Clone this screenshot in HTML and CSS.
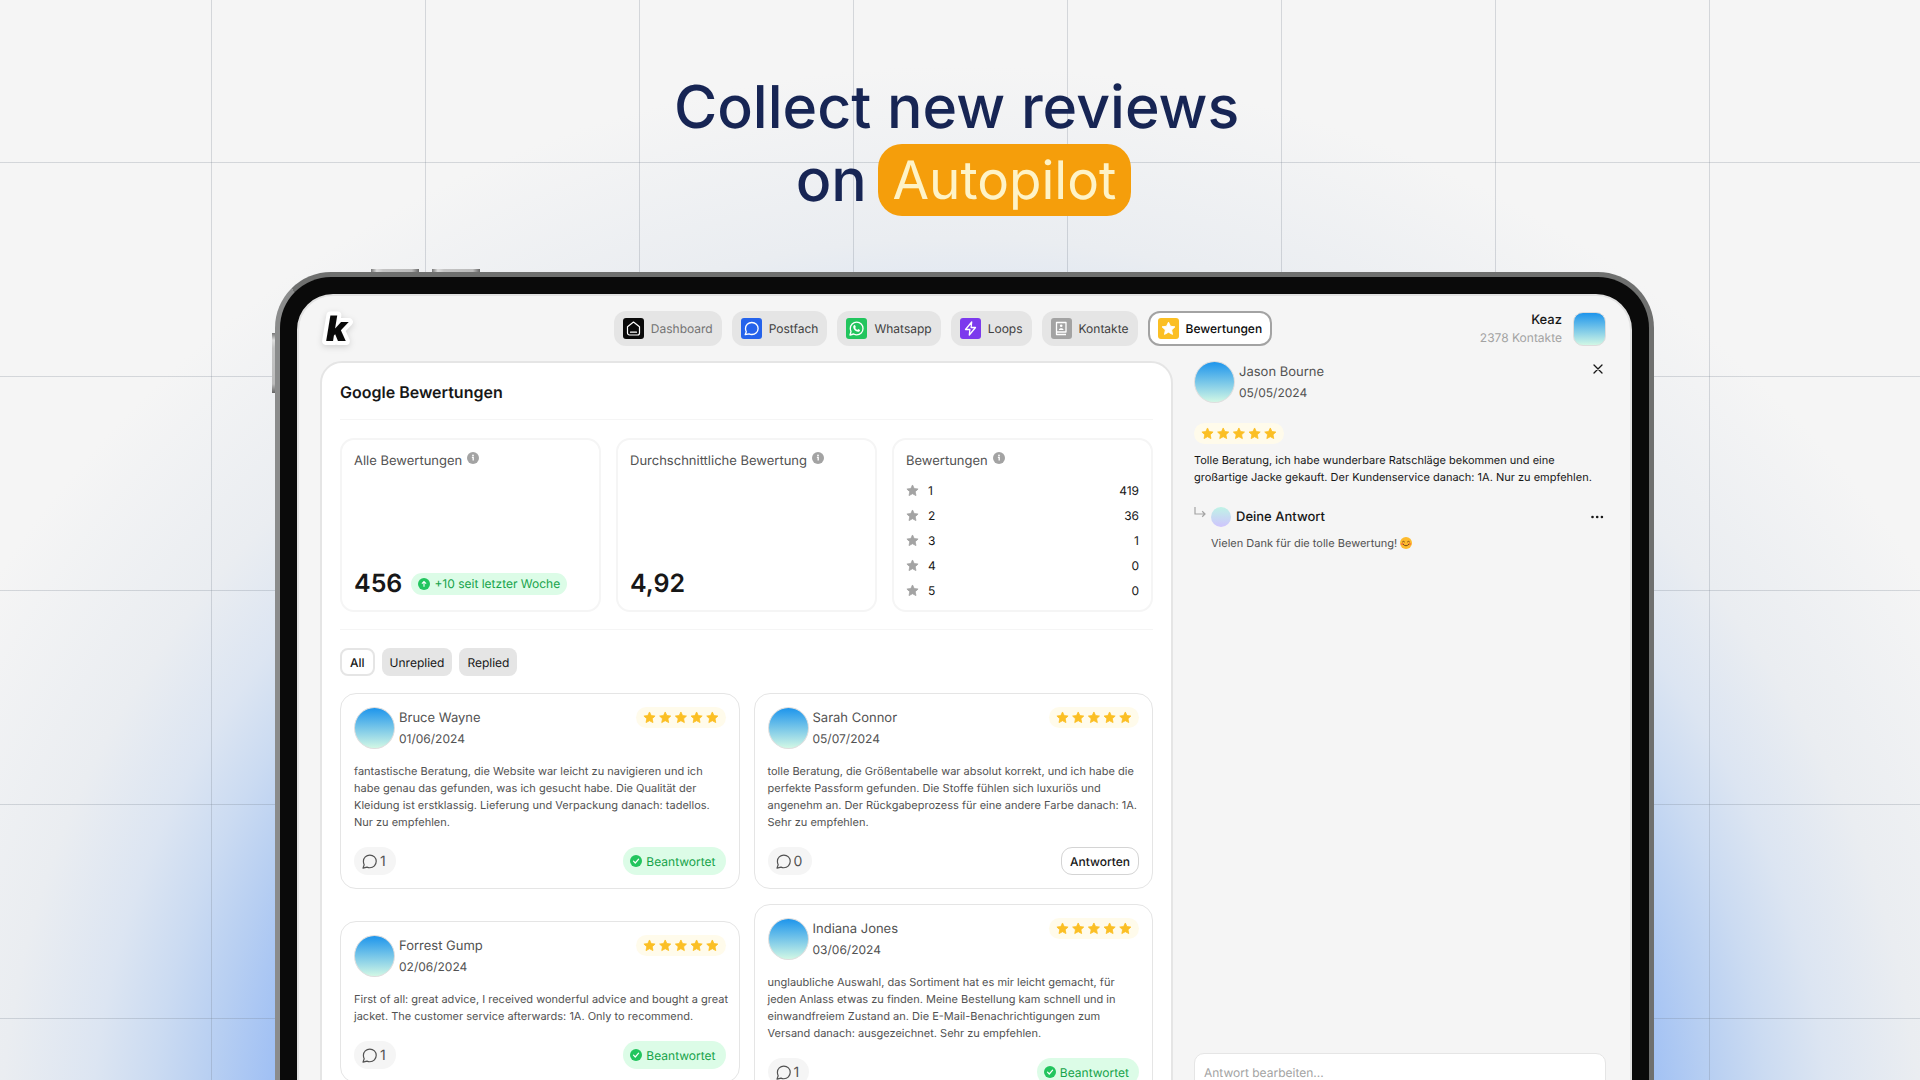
FILE: index.html
```html
<!DOCTYPE html>
<html lang="de">
<head>
    <meta charset="UTF-8">
    <meta name="viewport" content="width=device-width, initial-scale=1.0">
    <title>Keaz - Bewertungen</title>
    <link rel="stylesheet" href="styles.css">
</head>
<body>
    <svg class="sprite" aria-hidden="true">
        <symbol id="star" viewBox="0 0 24 24"><path d="M12 1.8l3.1 6.6 7.2.9-5.3 5 1.4 7.1L12 17.9l-6.4 3.5L7 14.300 1.700 9.300l7.200-.9z" fill="currentColor" stroke="currentColor" stroke-width="1.500" stroke-linejoin="round"/></symbol>
        <symbol id="stars" viewBox="0 0 76 14">
            <use href="#star" x="0" y="0" width="13" height="13"/>
            <use href="#star" x="15.700" y="0" width="13" height="13"/>
            <use href="#star" x="31.400" y="0" width="13" height="13"/>
            <use href="#star" x="47.100" y="0" width="13" height="13"/>
            <use href="#star" x="62.800" y="0" width="13" height="13"/>
        </symbol>
        <symbol id="info" viewBox="0 0 12 12"><circle cx="6" cy="6" r="6" fill="#a3a3a3"/><circle cx="6" cy="3.400" r=".9" fill="#fff"/><path d="M4.900 5.400h1.300v3.200" fill="none" stroke="#fff" stroke-width="1.300"/></symbol>
        <symbol id="bubble" viewBox="0 0 24 24"><path d="M12.500 3c5.200 0 9 3.900 9 8.800s-3.800 9-9 9c-1.500 0-2.800-.3-4-.9l-5.700 1.500 1.700-4.700c-.7-1.400-1.100-3-1.100-4.900C3.400 6.900 7.300 3 12.500 3z" fill="none" stroke="currentColor" stroke-width="1.700" stroke-linejoin="round"/></symbol>
        <symbol id="check" viewBox="0 0 12 12"><circle cx="6" cy="6" r="6" fill="#22c55e"/><path d="M3.500 6.200l1.800 1.800 3.300-3.800" fill="none" stroke="#fff" stroke-width="1.200" stroke-linecap="round" stroke-linejoin="round"/></symbol>
    </svg>

    <div class="stage">
        <h1 class="headline">Collect new reviews&nbsp;<br>on <span class="highlight">Autopilot</span></h1>

        <div class="tablet">
            <span class="key key-up"></span>
            <span class="key key-down"></span>
            <span class="key key-power"></span>
            <div class="screen">
                <header class="topbar">
                    <a class="logo" href="#" aria-label="Keaz">
                        <svg width="36" height="40" viewBox="0 0 36 40"><text x="6" y="32" class="logo-text">k</text></svg>
                    </a>
                    <nav class="nav">
                        <a class="tab muted" href="#">
                            <svg class="tab-icon" viewBox="0 0 21 21"><rect width="21" height="21" rx="3" fill="#0a0a0a"/><path d="M4.500 8.700l6-4.700 6 4.700v6.300a2 2 0 0 1-2 2h-8a2 2 0 0 1-2-2zM7.500 14.200h6" fill="none" stroke="#fff" stroke-width="1.200" stroke-linejoin="round" stroke-linecap="round"/></svg>
                            Dashboard
                        </a>
                        <a class="tab" href="#">
                            <svg class="tab-icon" viewBox="0 0 21 21"><rect width="21" height="21" rx="3" fill="#2563eb"/><path d="M10.800 4.500c3.700 0 6.300 2.600 6.300 6s-2.600 6-6.300 6c-1 0-1.900-.2-2.700-.6l-3.900.8 1.100-3c-.5-1-.8-2-.8-3.200 0-3.400 2.600-6 6.300-6z" fill="none" stroke="#fff" stroke-width="1.300" stroke-linejoin="round"/></svg>
                            Postfach
                        </a>
                        <a class="tab" href="#">
                            <svg class="tab-icon" viewBox="0 0 21 21"><rect width="21" height="21" rx="3" fill="#22c55e"/><path d="M10.700 4.200c3.600 0 6.300 2.700 6.300 6.300s-2.700 6.300-6.300 6.300c-1.100 0-2.100-.3-3-.8l-3.700 1 1-3.500c-.4-.9-.7-1.900-.7-3 0-3.600 2.800-6.300 6.400-6.300z" fill="none" stroke="#fff" stroke-width="1.300" stroke-linejoin="round"/><path d="M8 7.200l1-.1.8 1.900-.6.9c.5 1 1.200 1.600 2.200 2l.8-.8 1.800.9c0 1.200-.8 1.900-1.900 1.800-2.600-.3-4.700-2.500-4.900-4.900 0-.7.300-1.300.8-1.700z" fill="#fff"/></svg>
                            Whatsapp
                        </a>
                        <a class="tab" href="#">
                            <svg class="tab-icon" viewBox="0 0 21 21"><rect width="21" height="21" rx="3" fill="#7c3aed"/><path d="M11.700 4L5.500 11.500h4.400L9.300 17l6.200-7.500h-4.400z" fill="none" stroke="#fff" stroke-width="1.300" stroke-linejoin="round"/></svg>
                            Loops
                        </a>
                        <a class="tab" href="#">
                            <svg class="tab-icon" viewBox="0 0 21 21"><rect width="21" height="21" rx="3" fill="#a3a3a3"/><path d="M5.500 4.500h9.500v9.500H5.500zM5.500 14v2.500H15" fill="none" stroke="#fff" stroke-width="1.300" stroke-linejoin="round"/><circle cx="10.200" cy="7.800" r="1.300" fill="#fff"/><path d="M7.800 12c.2-2.500 4.600-2.500 4.800 0z" fill="#fff"/></svg>
                            Kontakte
                        </a>
                        <a class="tab active" href="#" aria-current="page">
                            <svg class="tab-icon" viewBox="0 0 21 21"><rect width="21" height="21" rx="3" fill="#fbbf24"/><use href="#star" x="3" y="3" width="15" height="15" color="#fff"/></svg>
                            Bewertungen
                        </a>
                    </nav>
                    <div class="account">
                        <div class="account-text">
                            <strong>Keaz</strong>
                            <span>2378 Kontakte</span>
                        </div>
                        <div class="account-image"></div>
                    </div>
                </header>

                <div class="content">
                    <main class="panel">
                        <h2 class="title">Google Bewertungen</h2>

                        <section class="stats">
                            <div class="stat">
                                <h3>Alle Bewertungen <svg class="info"><use href="#info"/></svg></h3>
                                <div class="figure">456
                                    <span class="trend">
                                        <svg width="12" height="12" viewBox="0 0 12 12"><circle cx="6" cy="6" r="6" fill="#22c55e"/><path d="M6 8.800V3.700M3.900 5.600L6 3.500l2.100 2.100" fill="none" stroke="#fff" stroke-width="1.100"/></svg>
                                        +10 seit letzter Woche
                                    </span>
                                </div>
                            </div>
                            <div class="stat">
                                <h3>Durchschnittliche Bewertung <svg class="info"><use href="#info"/></svg></h3>
                                <div class="figure">4,92</div>
                            </div>
                            <div class="stat">
                                <h3>Bewertungen <svg class="info"><use href="#info"/></svg></h3>
                                <table class="counts">
                                    <tr><td class="count-star"><svg><use href="#star"/></svg></td><td>1</td><td class="count">419</td></tr>
                                    <tr><td class="count-star"><svg><use href="#star"/></svg></td><td>2</td><td class="count">36</td></tr>
                                    <tr><td class="count-star"><svg><use href="#star"/></svg></td><td>3</td><td class="count">1</td></tr>
                                    <tr><td class="count-star"><svg><use href="#star"/></svg></td><td>4</td><td class="count">0</td></tr>
                                    <tr><td class="count-star"><svg><use href="#star"/></svg></td><td>5</td><td class="count">0</td></tr>
                                </table>
                            </div>
                        </section>

                        <div class="filters">
                            <button class="filter selected">All</button>
                            <button class="filter">Unreplied</button>
                            <button class="filter">Replied</button>
                        </div>

                        <section class="reviews">
                            <article class="review">
                                <div class="review-head">
                                    <div class="avatar"></div>
                                    <div class="person"><h4>Bruce Wayne</h4><time>01/06/2024</time></div>
                                    <div class="rating"><svg><use href="#stars"/></svg></div>
                                </div>
                                <p>fantastische Beratung, die Website war leicht zu navigieren und ich habe genau das gefunden, was ich gesucht habe. Die Qualität der Kleidung ist erstklassig. Lieferung und Verpackung danach: tadellos. Nur zu empfehlen.</p>
                                <div class="review-foot">
                                    <span class="replies"><svg><use href="#bubble"/></svg>1</span>
                                    <span class="answered"><svg><use href="#check"/></svg>Beantwortet</span>
                                </div>
                            </article>
                            <article class="review">
                                <div class="review-head">
                                    <div class="avatar"></div>
                                    <div class="person"><h4>Sarah Connor</h4><time>05/07/2024</time></div>
                                    <div class="rating"><svg><use href="#stars"/></svg></div>
                                </div>
                                <p>tolle Beratung, die Größentabelle war absolut korrekt, und ich habe die perfekte Passform gefunden. Die Stoffe fühlen sich luxuriös und angenehm an. Der Rückgabeprozess für eine andere Farbe danach: 1A. Sehr zu empfehlen.</p>
                                <div class="review-foot">
                                    <span class="replies"><svg><use href="#bubble"/></svg>0</span>
                                    <button class="answer">Antworten</button>
                                </div>
                            </article>
                            <article class="review">
                                <div class="review-head">
                                    <div class="avatar"></div>
                                    <div class="person"><h4>Forrest Gump</h4><time>02/06/2024</time></div>
                                    <div class="rating"><svg><use href="#stars"/></svg></div>
                                </div>
                                <p class="wide">First of all: great advice, I received wonderful advice and bought a great jacket. The customer service afterwards: 1A. Only to recommend.</p>
                                <div class="review-foot">
                                    <span class="replies"><svg><use href="#bubble"/></svg>1</span>
                                    <span class="answered"><svg><use href="#check"/></svg>Beantwortet</span>
                                </div>
                            </article>
                            <article class="review">
                                <div class="review-head">
                                    <div class="avatar"></div>
                                    <div class="person"><h4>Indiana Jones</h4><time>03/06/2024</time></div>
                                    <div class="rating"><svg><use href="#stars"/></svg></div>
                                </div>
                                <p>unglaubliche Auswahl, das Sortiment hat es mir leicht gemacht, für jeden Anlass etwas zu finden. Meine Bestellung kam schnell und in einwandfreiem Zustand an. Die E-Mail-Benachrichtigungen zum Versand danach: ausgezeichnet. Sehr zu empfehlen.</p>
                                <div class="review-foot">
                                    <span class="replies"><svg><use href="#bubble"/></svg>1</span>
                                    <span class="answered"><svg><use href="#check"/></svg>Beantwortet</span>
                                </div>
                            </article>
                        </section>
                    </main>

                    <aside class="detail">
                        <div class="review-head">
                            <div class="avatar"></div>
                            <div class="person"><h4>Jason Bourne</h4><time>05/05/2024</time></div>
                            <button class="icon-button" aria-label="Schließen"><svg width="12" height="12" viewBox="0 0 12 12"><path d="M2 2l8 8M10 2l-8 8" stroke="#171717" stroke-width="1.300" stroke-linecap="round"/></svg></button>
                        </div>
                        <div class="rating"><svg><use href="#stars"/></svg></div>
                        <p class="detail-text">Tolle Beratung, ich habe wunderbare Ratschläge bekommen und eine großartige Jacke gekauft. Der Kundenservice danach: 1A. Nur zu empfehlen.</p>
                        <div class="reply">
                            <svg class="reply-arrow" viewBox="0 0 12 12"><path d="M1 0v7h10M8.200 4.300L11 7 8.200 9.700" fill="none" stroke="#a3a3a3" stroke-width="1.200"/></svg>
                            <div class="reply-avatar"></div>
                            <h4>Deine Antwort</h4>
                            <button class="icon-button" aria-label="Mehr"><svg width="14" height="12" viewBox="0 0 14 12"><g fill="#171717"><circle cx="2.500" cy="6" r="1.300"/><circle cx="7.200" cy="6" r="1.300"/><circle cx="11.900" cy="6" r="1.300"/></g></svg></button>
                            <p>Vielen Dank für die tolle Bewertung!
                                <svg class="smiley" viewBox="0 0 12 12" role="img" aria-label="lächelndes Gesicht"><circle cx="6" cy="6" r="6" fill="#fdba2d"/><ellipse cx="2.300" cy="7" rx="1.500" ry="1.100" fill="#f97b3d"/><ellipse cx="9.700" cy="7" rx="1.500" ry="1.100" fill="#f97b3d"/><path d="M2.500 4.800q1-1.200 2 0M7.500 4.800q1-1.200 2 0M3.200 7.400q2.800 3 5.600 0" fill="none" stroke="#6b3f14" stroke-width=".9" stroke-linecap="round"/></svg>
                            </p>
                        </div>
                        <textarea class="reply-input" aria-label="Antwort bearbeiten" placeholder="Antwort bearbeiten..."></textarea>
                    </aside>
                </div>
            </div>
        </div>
    </div>
</body>
</html>
```

FILE: styles.css
```css
* { box-sizing: border-box; }
body {
    margin: 0;
    font-family: Inter, "Liberation Sans", sans-serif;
    font-size: 12px;
    text-rendering: geometricPrecision;
    color: #171717;
    background-color: #f5f5f5;
}
h1, h2, h3, h4, p { margin: 0; font-weight: 400; }
button, textarea { font-family: inherit; font-size: 12px; color: #171717; text-rendering: inherit; }
button { cursor: pointer; }
a { color: inherit; text-decoration: none; }
svg { display: block; flex-shrink: 0; }
.sprite { position: absolute; width: 0; height: 0; }

.stage {
    height: 100vh;
    overflow: hidden;
    padding: 71px 266px 0 275px;
    background:
        linear-gradient(90deg, rgba(110, 120, 135, 0.25) 1px, transparent 1px) 211px 0 / 214px 214px,
        linear-gradient(rgba(110, 120, 135, 0.25) 1px, transparent 1px) 0 162px / 214px 214px,
        radial-gradient(ellipse 1000px 960px at 50% 1160px, #98bbf5 67%, #b6cef2 75%, #cbdbf2 81%, #dce5f2 87%, #eaedf1 96%, rgba(245, 245, 245, 0) 114%);
}
.headline {
    text-align: center;
    color: #172554;
    font-size: 59px;
    font-weight: 500;
    line-height: 73px;
    margin-bottom: 55px;
}
.highlight {
    display: inline-block;
    margin: 0 2px 0 -5px;
    padding: 0 15px;
    border-radius: 24px;
    background: #f59e0b;
    color: #fef3c7;
    font-size: 53px;
    font-weight: 400;
    line-height: 72px;
    vertical-align: top;
}

/* device */
.tablet {
    position: relative;
    padding: 17px;
    border: 5px solid #6f706f;
    border-left-color: #8b8c8c;
    border-radius: 56px;
    background: #0a0a0a;
}
.screen {
    border: 2px solid #e2e2e2;
    border-radius: 36px;
    padding: 15px 24px 24px 21px;
    background: #f5f5f5;
}
.key { position: absolute; background: linear-gradient(90deg, #777, #ddd 12%, #c4c4c4 25%, #bbb 85%, #666); }
.key-up, .key-down { top: -8px; width: 48px; height: 3px; }
.key-up { left: 91px; }
.key-down { left: 152px; }
.key-power { left: -8px; top: 56px; width: 3px; height: 60px; background: linear-gradient(#777, #ddd 12%, #c4c4c4 25%, #bbb 85%, #666); }

/* top bar */
.topbar { display: grid; grid-template-columns: 22fr auto 25fr; grid-template-rows: 35px; align-items: center; margin-bottom: 15px; }
.logo { justify-self: start; }
.logo-text { font-size: 35px; font-weight: 900; font-style: italic; fill: #0a0a0a; stroke: #fff; stroke-width: 8px; stroke-linejoin: round; paint-order: stroke; }
.logo svg { overflow: visible; filter: drop-shadow(0 2px 3px rgba(0, 0, 0, 0.15)); }
.nav { display: flex; gap: 10px; }
.tab {
    display: flex;
    align-items: center;
    gap: 7px;
    height: 35px;
    padding: 0 9px;
    border-radius: 12px;
    background: #e5e5e5;
    color: #404040;
}
.tab.muted { color: #737373; }
.tab.active { background: #fff; border: 2px solid #a3a3a3; padding: 0 8px; color: #0a0a0a; font-weight: 500; }
.tab-icon { width: 21px; height: 21px; }
.account { display: flex; justify-self: end; gap: 11px; align-items: center; text-align: right; }
.account-text { display: flex; flex-direction: column; line-height: 17px; }
.account-text strong { font-size: 13px; font-weight: 500; }
.account-text span { color: #a3a3a3; }
.account-image { width: 33px; height: 34px; border: 1px solid #ddd; border-radius: 10px; background: linear-gradient(#1d95ec, #d1f7e5); }

/* left panel */
.content { display: grid; grid-template-columns: 853fr 412fr; gap: 21px; }
.panel { border: 2px solid #e5e5e5; border-radius: 22px; padding: 0 18px 18px; background: #fff; }
.title { padding: 17px 0 15px; font-size: 16px; font-weight: 600; line-height: 24px; border-bottom: 1px solid #f5f5f5; }
.stats { display: grid; grid-template-columns: repeat(3, 1fr); gap: 15px; padding: 18px 0 17px; border-bottom: 1px solid #f5f5f5; }
.stat { display: flex; flex-direction: column; justify-content: space-between; height: 174px; padding: 12px 12px 7px; border: 2px solid #f5f5f5; border-radius: 14px; }
.stat h3 { display: flex; gap: 5px; font-size: 13px; line-height: 18px; color: #525252; }
.info { width: 12px; height: 12px; }
.figure { display: flex; align-items: center; gap: 9px; font-size: 25px; font-weight: 600; line-height: 38px; }
.trend { display: flex; align-items: center; gap: 4px; height: 22px; padding: 0 7px; border-radius: 11px; background: #dcfce7; color: #16a34a; font-size: 12px; font-weight: 400; }
.counts { width: 100%; border-collapse: collapse; }
.counts td { height: 25px; padding: 0; }
.counts svg { width: 13px; height: 13px; color: #a3a3a3; }
.count-star { width: 22px; }
.counts .count { text-align: right; }
.filters { display: flex; gap: 7px; padding: 18px 0 17px; }
.filter { height: 28px; padding: 0 8px; border: 0; border-radius: 8px; background: #e5e5e5; }
.filter.selected { border: 2px solid #e5e5e5; background: #fff; font-weight: 500; }

/* reviews */
.reviews { display: grid; grid-template-columns: 1fr 1fr; gap: 15px 14px; align-items: center; }
.review { border: 1px solid #e5e5e5; border-radius: 16px; padding: 13px; }
.review-head { display: flex; align-items: flex-start; gap: 4px; }
.avatar { width: 41px; height: 42px; border: 1px solid #dedede; border-radius: 50%; background: linear-gradient(#1d95ec, #d1f7e5); }
.person { flex: 1; color: #525252; line-height: 20px; }
.person h4 { font-size: 13px; line-height: 22px; }
.rating { display: flex; align-items: center; justify-content: center; width: 90px; height: 21px; border-radius: 11px; background: #fffbeb; color: #fbbf24; }
.rating svg { width: 76px; height: 14px; }
.review p { margin: 14px 0 16px; font-size: 11px; line-height: 17px; color: #525252; }
.review p.wide { margin-right: -12px; }
.review-foot { display: flex; align-items: center; justify-content: space-between; }
.replies, .answered { display: flex; align-items: center; height: 28px; border-radius: 14px; }
.replies { gap: 2px; padding: 0 10px 0 7px; background: #f5f5f5; color: #525252; font-size: 14px; }
.replies svg { width: 17px; height: 17px; }
.answered { gap: 4px; padding: 0 10px 0 7px; background: #dcfce7; color: #16a34a; }
.answered svg { width: 12px; height: 12px; }
.answer { height: 28px; padding: 0 8px; border: 1px solid #d4d4d4; border-radius: 11px; background: #fff; font-weight: 500; }

/* detail */
.detail { display: flex; flex-direction: column; }
.detail .rating { margin: 20px 0 8px; }
.detail-text { font-size: 11px; line-height: 17px; }
.icon-button { display: flex; padding: 2px; border: 0; background: none; }
.reply { display: grid; grid-template-columns: 12px 20px 1fr auto; gap: 7px 5px; align-items: center; margin-top: 21px; }
.reply-arrow { width: 12px; height: 12px; align-self: start; }
.reply-avatar { width: 20px; height: 20px; border-radius: 50%; background: linear-gradient(#bff3e6, #cfc4fd); }
.reply h4 { font-size: 13px; font-weight: 500; }
.reply p { display: flex; align-items: center; gap: 3px; grid-column: 2 / -1; font-size: 11px; line-height: 18px; color: #525252; }
.smiley { width: 12px; height: 12px; }
.reply-input { margin-top: auto; height: 67px; padding: 11px 9px; border: 1px solid #e5e5e5; border-radius: 10px; resize: none; background: #fff; }
.reply-input::placeholder { color: #a3a3a3; }
```
